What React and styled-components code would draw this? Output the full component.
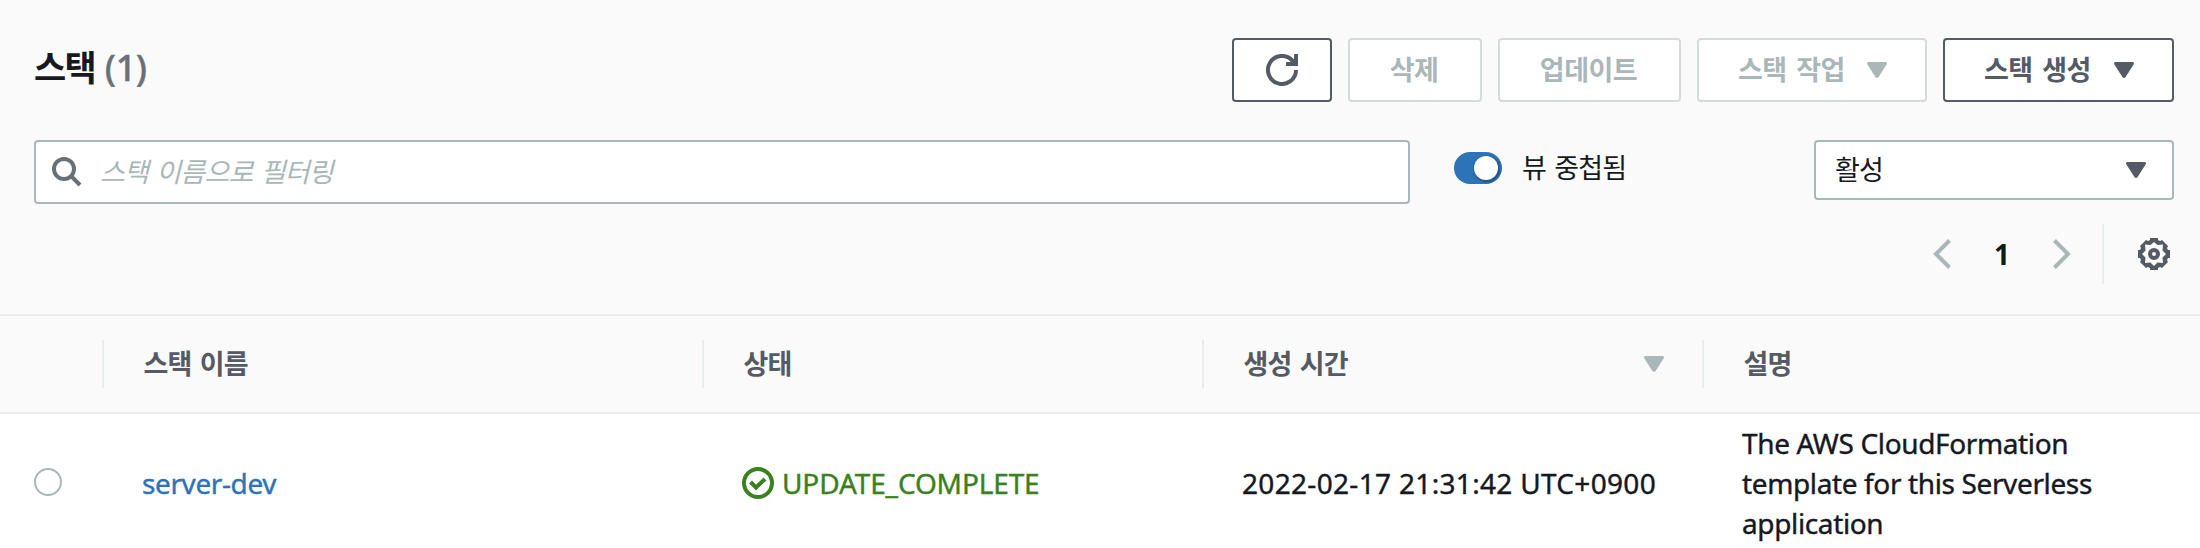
import React from "react";
import styled, { createGlobalStyle } from "styled-components";

const color = {
  ink: "#16191f",
  slate: "#545b64",
  gray: "#687078",
  muted: "#aab7b8",
  faint: "#d5dbdb",
  line: "#eaeded",
  blue: "#2e73b8",
  green: "#3a8120",
};

const GlobalStyle = createGlobalStyle`
  *, *::before, *::after { box-sizing: border-box; }
  body {
    margin: 0;
    background: #fff;
    color: ${color.ink};
    font-family: "Noto Sans", "Noto Sans CJK KR", sans-serif;
    font-size: 28px;
    line-height: 40px;
    overflow: hidden;
  }
  svg { display: block; flex: none; }
`;

const Panel = styled.main`
  width: 2200px;
  height: 548px;
  overflow: hidden;
`;

const PanelHeader = styled.header`
  height: 314px;
  padding: 38px 26px 0 34px;
  background: #fafafa;
`;

const TitleBar = styled.div`
  display: flex;
  justify-content: space-between;
  height: 64px;
`;

const Title = styled.h2`
  display: flex;
  align-items: center;
  gap: 10px;
  margin: 0;
  padding-bottom: 4px;
  font-size: 35px;
  font-weight: 700;
  letter-spacing: -1.8px;
`;

const Counter = styled.span`
  color: ${color.gray};
  font-size: 36px;
  font-weight: 500;
  letter-spacing: -0.4px;
  -webkit-text-stroke: 0.4px currentColor;
`;

const Actions = styled.div`
  display: flex;
  gap: 16px;
`;

const Label = styled.span`
  padding-bottom: ${(p) => p.$lift || 0}px;
  font-size: 27px;
  letter-spacing: -0.8px;
  word-spacing: 2px;
`;

const ButtonLabel = styled(Label)`
  padding: 0 2px 1px 0;
  letter-spacing: -0.5px;
  word-spacing: 3px;
`;

const Button = styled.button`
  display: flex;
  align-items: center;
  justify-content: ${(p) => (p.$menu ? "space-between" : "center")};
  width: ${(p) => p.$width}px;
  height: 64px;
  padding: ${(p) => (p.$menu ? "0 38px 0 39px" : "0")};
  border: 2px solid ${(p) => (p.disabled ? color.faint : color.slate)};
  border-radius: 4px;
  background: #fff;
  color: ${(p) => (p.disabled ? color.muted : color.slate)};
  font: inherit;
  font-weight: 700;
`;

const Filters = styled.div`
  display: flex;
  align-items: flex-start;
  height: 64px;
  margin-top: 38px;
`;

const SearchBox = styled.label`
  display: flex;
  align-items: center;
  gap: 18px;
  width: 1376px;
  height: 64px;
  padding-left: 16px;
  border: 2px solid ${color.muted};
  border-radius: 4px;
  background: #fff;
`;

const SearchInput = styled.input`
  flex: 1;
  padding: 0;
  border: 0;
  outline: 0;
  background: none;
  font: inherit;
  font-size: 27px;
  letter-spacing: -0.8px;
  word-spacing: 2px;
  &::placeholder { color: ${color.muted}; font-style: italic; opacity: 1; }
`;

const Toggle = styled.div`
  display: flex;
  align-items: center;
  gap: 20px;
  height: 56px;
  margin-left: 44px;
`;

const Track = styled.span`
  display: flex;
  justify-content: flex-end;
  width: 48px;
  height: 32px;
  padding: 4px;
  border-radius: 16px;
  background: ${color.blue};
`;

const Knob = styled.span`
  width: 24px;
  height: 24px;
  border-radius: 50%;
  background: #fff;
  box-shadow: 1px 1px 2px 1px rgba(0, 0, 0, 0.3);
`;

const Select = styled.div`
  display: flex;
  align-items: center;
  justify-content: space-between;
  width: 360px;
  height: 60px;
  margin-left: auto;
  padding: 0 26px 0 19px;
  border: 2px solid ${color.muted};
  border-radius: 4px;
  background: #fff;
`;

const Pager = styled.nav`
  display: flex;
  align-items: center;
  justify-content: flex-end;
  height: 60px;
  margin-top: 20px;
  padding-right: 4px;
`;

const PageNumber = styled.span`
  width: 102px;
  text-align: center;
  font-weight: 700;
`;

const PagerDivider = styled.span`
  width: 2px;
  height: 60px;
  margin: 0 34px 0 31px;
  background: ${color.line};
`;

const columns = "102px 600px 500px 500px 1fr";

const TableHead = styled.div`
  display: grid;
  grid-template-columns: ${columns};
  align-items: center;
  height: 100px;
  border: solid ${color.line};
  border-width: 2px 0;
  background: #fafafa;
`;

const HeadCell = styled.div`
  display: flex;
  align-items: center;
  justify-content: space-between;
  height: 48px;
  padding: 0 38px 0 39.5px;
  border-left: 2px solid ${color.line};
  color: ${color.slate};
  font-weight: 700;
`;

const TableRow = styled.div`
  display: grid;
  grid-template-columns: ${columns};
  align-items: center;
  height: 134px;
  padding: 9px 0 5px;
`;

const Cell = styled.div`
  display: flex;
  align-items: center;
  gap: 8px;
  padding-left: 40px;
  color: ${(p) => p.$tone || color.ink};
  letter-spacing: ${(p) => p.$tracking || 0}px;
  white-space: nowrap;
  -webkit-text-stroke: 0.4px currentColor;
`;

const Radio = styled.span`
  width: 28px;
  height: 28px;
  margin: 0 0 2px 34px;
  border: 2px solid ${color.muted};
  border-radius: 50%;
  background: #fff;
`;

const Caret = ({ fill = "currentColor" }) => (
  <svg width="20" height="16" viewBox="0 0 20 16" fill={fill}>
    <path d="M1.2 0H18.8Q20.6 .8 19.6 2.5L11.6 15Q10 17 8.4 15L.4 2.5Q-.6.8 1.2 0Z" />
  </svg>
);

const RefreshIcon = () => (
  <svg width="32" height="32" viewBox="0 0 16 16" fill="none" stroke="currentColor" strokeWidth="2">
    <path d="M15 8a7 7 0 1 1-1.8-4.7L14.5 4.8" />
    <path d="M15 0v5h-5" />
  </svg>
);

const SearchIcon = () => (
  <svg width="30" height="30" viewBox="0 0 30 30" fill="none" stroke={color.gray} strokeWidth="4">
    <circle cx="12" cy="12" r="10" />
    <path d="M19 19l9 9" />
  </svg>
);

const Chevron = ({ right }) => (
  <svg width="18" height="30" viewBox="0 0 18 30" fill="none" stroke={color.muted} strokeWidth="4">
    <path d={right ? "M1.5 1.5L15 15 1.5 28.5" : "M16.5 1.5L3 15l13.5 13.5"} />
  </svg>
);

const GearIcon = () => (
  <svg width="32" height="32" viewBox="0 0 32 32" fill={color.slate} fillRule="evenodd">
    <path d="M12 0h8v2l2 1 2-1 6 6-1 2 1 2h2v8h-2l-1 2 1 2-6 6-2-1-2 1v2h-8v-2l-2-1-2 1-6-6 1-2-1-2H0v-8h2l1-2-1-2 6-6 2 1 2-1zM16 4l-3.500 3-5.500-.5.5 6L4 16l3.500 3.500-.5 5.500 5.500-.5L16 28l3.500-3.500 5.500.5-.5-5.500L28 16l-3.500-3.500.5-6-5.500.5z" />
    <path d="M16 10a6 6 0 1 0 0 12 6 6 0 0 0 0-12zm0 4a2 2 0 1 1 0 4 2 2 0 0 1 0-4z" />
  </svg>
);

const CheckIcon = () => (
  <svg width="32" height="32" viewBox="0 0 32 32" fill="none" stroke="currentColor" strokeWidth="4">
    <circle cx="16" cy="16" r="14" />
    <path d="M8.5 15l5.5 5.5L23 12" />
  </svg>
);

export default function App() {
  return (
    <>
      <GlobalStyle />
      <Panel>
        <PanelHeader>
          <TitleBar>
            <Title>스택 <Counter>(1)</Counter></Title>
            <Actions>
              <Button $width={100}><RefreshIcon /></Button>
              <Button $width={134} disabled><ButtonLabel>삭제</ButtonLabel></Button>
              <Button $width={183} disabled><ButtonLabel>업데이트</ButtonLabel></Button>
              <Button $width={230} $menu disabled><ButtonLabel>스택 작업</ButtonLabel><Caret /></Button>
              <Button $width={231} $menu><ButtonLabel>스택 생성</ButtonLabel><Caret /></Button>
            </Actions>
          </TitleBar>
          <Filters>
            <SearchBox>
              <SearchIcon />
              <SearchInput placeholder="스택 이름으로 필터링" />
            </SearchBox>
            <Toggle><Track><Knob /></Track><Label $lift={1}>뷰 중첩됨</Label></Toggle>
            <Select><Label>활성</Label><Caret fill={color.slate} /></Select>
          </Filters>
          <Pager>
            <Chevron />
            <PageNumber>1</PageNumber>
            <Chevron right />
            <PagerDivider />
            <GearIcon />
          </Pager>
        </PanelHeader>
        <TableHead>
          <span />
          <HeadCell><Label $lift={1}>스택 이름</Label></HeadCell>
          <HeadCell><Label $lift={1}>상태</Label></HeadCell>
          <HeadCell><Label $lift={1}>생성 시간</Label><Caret fill={color.muted} /></HeadCell>
          <HeadCell><Label $lift={1}>설명</Label></HeadCell>
        </TableHead>
        <TableRow>
          <Radio />
          <Cell $tone={color.blue} $tracking={-0.4}>server-dev</Cell>
          <Cell $tone={color.green} $tracking={-0.13}><CheckIcon />UPDATE_COMPLETE</Cell>
          <Cell $tracking={0.32}>2022-02-17 21:31:42 UTC+0900</Cell>
          <Cell $tracking={-0.37}>The AWS CloudFormation<br />template for this Serverless<br />application</Cell>
        </TableRow>
      </Panel>
    </>
  );
}
